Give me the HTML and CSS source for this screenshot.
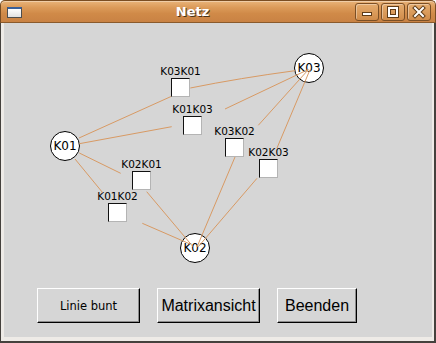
FILE: index.html
```html
<!DOCTYPE html>
<html>
<head>
<meta charset="utf-8">
<title>Netz</title>
<link rel="stylesheet" href="styles.css">
</head>
<body>
<div class="window">
  <div class="titlebar">
    <span class="app-icon"></span>
    <span class="title">Netz</span>
    <div class="wm-buttons">
      <span class="wm-btn">
        <svg width="22" height="16" viewBox="0 0 22 16"><rect class="ico-dark" x="6.5" y="8.5" width="9" height="3"/><rect class="ico-light" x="7.5" y="9.5" width="7" height="1"/></svg>
      </span>
      <span class="wm-btn">
        <svg width="22" height="16" viewBox="0 0 22 16"><rect class="ico-outline" x="7" y="4" width="8" height="8"/><rect class="ico-white" x="7" y="4" width="8" height="8"/></svg>
      </span>
      <span class="wm-btn">
        <svg width="22" height="16" viewBox="0 0 22 16"><path class="ico-outline" d="M7 4 L15 12 M15 4 L7 12"/><path class="ico-white" d="M7 4 L15 12 M15 4 L7 12"/></svg>
      </span>
    </div>
  </div>
  <div class="frame">
    <div class="content">
      <div class="canvas">
        <div class="node node-k01">K01</div>
        <div class="node node-k02">K02</div>
        <div class="node node-k03">K03</div>

        <div class="edge edge-k03k01"><span class="edge-label">K03K01</span><span class="check"></span></div>
        <div class="edge edge-k01k03"><span class="edge-label">K01K03</span><span class="check"></span></div>
        <div class="edge edge-k03k02"><span class="edge-label">K03K02</span><span class="check"></span></div>
        <div class="edge edge-k02k03"><span class="edge-label">K02K03</span><span class="check"></span></div>
        <div class="edge edge-k02k01"><span class="edge-label">K02K01</span><span class="check"></span></div>
        <div class="edge edge-k01k02"><span class="edge-label">K01K02</span><span class="check"></span></div>

        <svg class="wires" width="428" height="265" viewBox="4 23 428 265">
          <path d="M79 138 L171 96.5"/>
          <path d="M190.3 88 Q240 78 295 70.7"/>
          <path d="M79.3 143.7 L171.7 126.7"/>
          <path d="M225 109 L308.3 69.5"/>
          <path d="M79.3 153 L120.7 173.3"/>
          <path d="M146.7 191.7 L193 246.7"/>
          <path d="M75 159 L102.7 192.7"/>
          <path d="M142.3 223.3 L190 244"/>
          <path d="M258.3 125.3 L308.3 69.7"/>
          <path d="M235 157 L197 247"/>
          <path d="M277 148 L310 69.7"/>
          <path d="M257 178.3 L198.3 246.7"/>
        </svg>
      </div>
      <div class="actions">
        <button class="btn btn-wide btn-small">Linie bunt</button>
        <button class="btn btn-wide">Matrixansicht</button>
        <button class="btn btn-narrow">Beenden</button>
      </div>
    </div>
  </div>
</div>
</body>
</html>
```

FILE: styles.css
```css
html, body {
  margin: 0;
  padding: 0;
  background: #ffffff;
}

.window {
  width: 436px;
  height: 343px;
  display: flex;
  flex-direction: column;
  font-family: "DejaVu Sans", sans-serif;
}

/* ---------- title bar ---------- */
.titlebar {
  height: 23px;
  box-sizing: border-box;
  display: flex;
  align-items: center;
  border: 1px solid #7a4d22;
  border-bottom-color: #8a5a2c;
  border-radius: 5px 5px 0 0;
  background: linear-gradient(to bottom, #e9b47a 0%, #dc9b5a 30%, #d08a48 60%, #c98244 100%);
  box-shadow: inset 0 1px 0 rgba(255, 255, 255, 0.35);
}

.app-icon {
  width: 15px;
  height: 11px;
  box-sizing: border-box;
  margin-left: 6px;
  margin-top: 1px;
  border: 1px solid #4e4e4e;
  border-top: 2px solid #3a5f99;
  background: linear-gradient(to bottom, #ffffff, #e2e2e2);
}

.title {
  flex: 1;
  text-align: center;
  padding-left: 8px;
  font: bold 13px/21px "DejaVu Sans", sans-serif;
  color: #ffffff;
  text-shadow: 1px 1px 0 #4a3218;
}

.wm-buttons {
  display: flex;
  gap: 2px;
  margin-right: 4px;
}

.wm-btn {
  width: 24px;
  height: 18px;
  box-sizing: border-box;
  border: 1px solid #7b4f25;
  border-radius: 3px;
  background: linear-gradient(to bottom, #e5ac6e, #d08c4a);
  box-shadow: inset 1px 1px 0 rgba(255, 255, 255, 0.35);
  display: flex;
  align-items: center;
  justify-content: center;
}

.wm-btn svg {
  display: block;
}

.ico-dark {
  fill: #ffffff;
  stroke: #5e3b17;
  stroke-width: 1;
}

.ico-light {
  fill: #ffffff;
}

.ico-outline {
  fill: none;
  stroke: #5e3b17;
  stroke-width: 4;
  stroke-linecap: square;
}

.ico-white {
  fill: none;
  stroke: #ffffff;
  stroke-width: 2;
  stroke-linecap: square;
}

/* ---------- frame ---------- */
.frame {
  flex: 1;
  display: flex;
  border-left: 1px solid #45413d;
  border-right: 2px solid #45413d;
  border-bottom: 2px solid #45413d;
  background: #eeebe7;
  padding: 0 2px 4px 3px;
}

.content {
  flex: 1;
  background: #d6d6d6;
  display: flex;
  flex-direction: column;
}

/* ---------- diagram canvas ---------- */
.canvas {
  position: relative;
  height: 265px;
}

.node {
  position: absolute;
  width: 30px;
  height: 30px;
  box-sizing: border-box;
  border: 1px solid #000000;
  border-radius: 50%;
  background: #ffffff;
  display: flex;
  align-items: center;
  justify-content: center;
  font: 12px/1 "DejaVu Sans", sans-serif;
  color: #000000;
}

.node-k01 { left: 46px; top: 108px; }
.node-k02 { left: 176px; top: 210px; }
.node-k03 { left: 290px; top: 30px; }

.edge {
  position: absolute;
  width: 49px;
  display: flex;
  flex-direction: column;
  align-items: center;
}

.edge-label {
  font: 10.5px/12px "DejaVu Sans", sans-serif;
  color: #000000;
  white-space: nowrap;
}

.check {
  width: 19px;
  height: 19px;
  box-sizing: border-box;
  margin-top: 1px;
  background: #ffffff;
  border: 1px solid;
  border-color: #111111 #b4b4b4 #b4b4b4 #111111;
}

.edge-k03k01 { left: 152px; top: 42px; }
.edge-k01k03 { left: 164px; top: 80px; }
.edge-k03k02 { left: 206px; top: 102px; }
.edge-k02k03 { left: 240px; top: 123px; }
.edge-k02k01 { left: 113px; top: 135px; }
.edge-k01k02 { left: 89px; top: 167px; }

.wires {
  position: absolute;
  left: 0;
  top: 0;
  pointer-events: none;
}

.wires path {
  fill: none;
  stroke: #d89a64;
  stroke-width: 1;
}

/* ---------- buttons ---------- */
.actions {
  display: flex;
  gap: 17px;
  padding-left: 33px;
}

.btn {
  height: 35px;
  box-sizing: border-box;
  margin: 0;
  padding: 0;
  background: #d6d6d6;
  border: 1px solid;
  border-color: #ffffff #000000 #000000 #ffffff;
  box-shadow: inset -1px -1px 0 #8c8c8c;
  font: 16px "Liberation Sans", Arial, sans-serif;
  color: #000000;
  -webkit-appearance: none;
  appearance: none;
}

.btn-wide { width: 103px; }
.btn-narrow { width: 80px; }

.btn-small {
  font: 11.5px "DejaVu Sans", sans-serif;
}
```
